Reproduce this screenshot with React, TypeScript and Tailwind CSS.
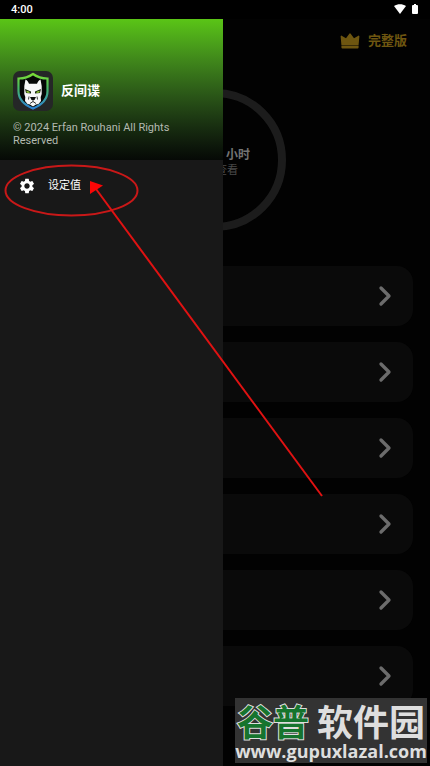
import { ChevronRight } from 'lucide-react';
import { MdSettings } from 'react-icons/md';

const CARDS = ['1', '2', '3', '4', '5', '6'];

function StatusBar() {
  return (
    <div className="flex h-[19px] items-center justify-between bg-black pl-[11px] pr-3 text-white">
      <span className="text-[11px] font-medium leading-4">4:00</span>
      <span className="flex items-center gap-[6px] pb-[2px]">
        <svg viewBox="0 0 12 10" className="h-[10px] w-3" fill="currentColor" aria-hidden="true">
          <path d="M0 2C3.5-.5 8.500-.5 12 2L6 10Z" />
        </svg>
        <svg viewBox="0 0 6 10" className="h-[10px] w-[6px]" fill="currentColor" aria-hidden="true">
          <path d="M2 0h2v1h1q1 0 1 1v7q0 1-1 1H1Q0 10 0 9V2q0-1 1-1h1Z" />
        </svg>
      </span>
    </div>
  );
}

function CrownIcon() {
  return (
    <svg viewBox="0 0 20 16" className="h-4 w-5" fill="currentColor" aria-hidden="true">
      <path d="M.6 3.200a1 1 0 0 1 1.500-.3L6 5.200 9.300.8a.9.900 0 0 1 1.400 0L14 5.200l3.900-2.300a1 1 0 0 1 1.500.3L18.600 12H1.400Z" />
      <path d="M1.400 12.500h17.200V14.500q0 1-1 1H2.400q-1 0-1-1Z" />
    </svg>
  );
}

function AppLogo() {
  return (
    <svg viewBox="0 0 40 40" className="h-10 w-10 shrink-0" aria-hidden="true">
      <defs>
        <linearGradient id="shield" x1="0" y1="0" x2="0" y2="1">
          <stop offset="0" stopColor="#79dc35" />
          <stop offset="0.4" stopColor="#48b864" />
          <stop offset="1" stopColor="#2b83d6" />
        </linearGradient>
      </defs>
      <rect width="40" height="40" rx="7" fill="#252727" />
      <path
        d="M20 3c4 3 9 4.500 14.500 4.500V20c0 8-6 14-14.500 17.500C11.500 34 5.500 28 5.500 20V7.500C11 7.500 16 6 20 3Z"
        fill="#050706"
        stroke="url(#shield)"
        strokeWidth="2.200"
      />
      <path
        d="M12.500 8.500c1.800 1 2.800 2.500 3.500 4.200h8c.7-1.700 1.700-3.200 3.500-4.200l1.200 6.500v8l-1 3 .3 4-2.500 3-2.500.5-3 2-3-2-2.500-.5-2.500-3 .3-4-1-3v-8Z"
        fill="#f7f7f7"
      />
      <path d="m12 18 6 2.500v2l-5-.5Zm16 0-6 2.500v2l5-.5Z" fill="#17230c" />
      <path d="m13.500 19.700 3 1v1.300l-3-.6Zm13 0-3 1v1.300l3-.6Z" fill="#9ad23b" />
      <path d="M17 26h6l-1.500 3h-3Z" fill="#111" />
      <path
        d="M20 28.500v2l-3 2m3-2 3 2M16 25.500l-.5 3m8.500-3 .5 3"
        fill="none"
        stroke="#222"
        strokeWidth=".9"
      />
    </svg>
  );
}

function Drawer() {
  return (
    <aside className="absolute inset-y-0 left-0 w-[52%] max-w-[223px] bg-[#181818]">
      <header className="flex h-[141px] flex-col justify-end bg-linear-to-b from-[#5ac516] to-[#060906] px-[13px] pb-[13px]">
        <div className="mb-[10px] flex items-center gap-2">
          <AppLogo />
          <h1 className="text-[13px] font-bold leading-5 text-white">反间谍</h1>
        </div>
        <p className="text-[11px] leading-[13px] text-[#b4bab1]">© 2024 Erfan Rouhani All Rights Reserved</p>
      </header>
      <nav>
        <button type="button" className="flex h-[52px] w-full items-center gap-3 pl-[18px] text-white">
          <MdSettings className="h-[18px] w-[18px]" />
          <span className="text-[11px] leading-4">设定值</span>
        </button>
      </nav>
    </aside>
  );
}

function Dashboard() {
  return (
    <main>
      <div className="flex h-[70px] items-start justify-end pr-[23px] pt-3">
        <button type="button" className="flex items-center gap-2 text-[#6e5610]">
          <CrownIcon />
          <span className="text-[13px] font-bold leading-5">完整版</span>
        </button>
      </div>

      <div className="mx-auto flex h-[142px] w-[142px] flex-col items-end justify-center rounded-full border-8 border-[#1c1c1c] pt-[6px]">
        <span className="pr-7 text-[12px] font-bold leading-4 text-[#747474]">小时</span>
        <span className="pr-10 text-[11px] leading-4 text-[#4a4a4a]">查看</span>
      </div>

      <div className="mt-[35px] flex flex-col gap-4 px-[17px]">
        {CARDS.map((card) => (
          <button
            key={card}
            type="button"
            aria-label={card}
            className="flex h-[60px] w-full items-center justify-end rounded-2xl bg-[#0a0a0a] pr-3 text-[#6c6c6c]"
          >
            <ChevronRight className="h-8 w-8" strokeWidth={2.5} />
          </button>
        ))}
      </div>
    </main>
  );
}

function PointerMark() {
  return (
    <svg
      viewBox="0 0 430 500"
      className="pointer-events-none absolute left-0 top-0 h-[500px] w-[430px]"
      fill="none"
      stroke="#e01212"
      strokeWidth="2"
      aria-hidden="true"
    >
      <ellipse cx="71.500" cy="190.500" rx="66" ry="25" stroke="#c91818" />
      <path d="M322 496 96 189" />
      <path d="M90 181l13 4.500L90 194Z" fill="#fb0606" stroke="none" />
    </svg>
  );
}

function Watermark() {
  return (
    <div className="absolute bottom-[3px] right-[3px] flex h-[65px] w-48 flex-col items-center justify-end overflow-hidden bg-[#333] pb-[2px] text-[#dedede]">
      <div className="flex gap-2 whitespace-nowrap text-[36px] font-bold leading-[34px]">
        <span className="text-[#16742e] [-webkit-text-stroke:2px_#dedede] [paint-order:stroke]">谷普</span>
        <span>软件园</span>
      </div>
      <a href="#" className="font-['Open_Sans'] text-[18px] font-bold leading-[20px]">
        www.gupuxlazal.com
      </a>
    </div>
  );
}

export default function App() {
  return (
    <div className="relative flex min-h-screen flex-col overflow-hidden bg-[#020202] font-[Roboto,'Noto_Sans_CJK_SC',sans-serif]">
      <StatusBar />
      <div className="relative flex-1">
        <Dashboard />
        <Drawer />
      </div>
      <PointerMark />
      <Watermark />
    </div>
  );
}
